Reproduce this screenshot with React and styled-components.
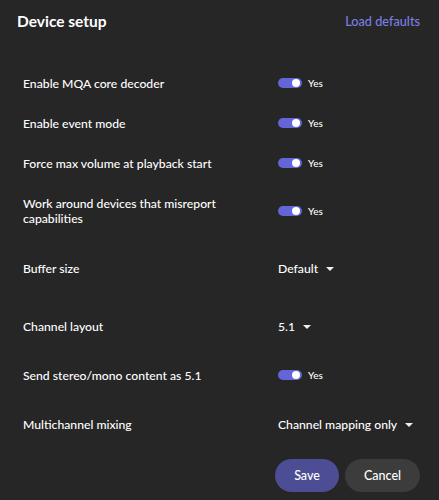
import React from 'react';
import styled, {createGlobalStyle} from 'styled-components';

const GlobalStyle = createGlobalStyle`
    html, body {
        margin: 0;
        padding: 0;
        background: #262626;
    }
`;

const Container = styled.div`
    width: 439px;
    height: 500px;
    box-sizing: border-box;
    background: #262626;
    color: #ffffff;
    font-family: Lato, 'Noto Sans', sans-serif;
    display: flex;
    flex-direction: column;
`;

const Header = styled.div`
    display: flex;
    align-items: center;
    justify-content: space-between;
    height: 42px;
    padding: 0 19px 0 17px;
`;

const Title = styled.h1`
    margin: 0;
    font-size: 15.5px;
    font-weight: 700;
    color: #ffffff;
`;

const LinkButton = styled.button`
    border: none;
    background: none;
    padding: 0;
    font-family: inherit;
    font-size: 12.7px;
    font-weight: 500;
    color: #7b7ee6;
    cursor: pointer;
`;

const List = styled.div`
    display: flex;
    flex-direction: column;
    margin-top: 21px;
    padding: 0 19px 0 23px;
`;

const Row = styled.div`
    display: grid;
    grid-template-columns: 1fr 142px;
    align-items: center;
    min-height: ${p => p.$height}px;
`;

const Label = styled.div`
    font-size: 12.2px;
    font-weight: 500;
    line-height: 15px;
    padding-right: 20px;
`;

const ToggleWrap = styled.div`
    display: flex;
    align-items: center;
    gap: 6px;
`;

const Track = styled.div`
    position: relative;
    width: 24px;
    height: 10px;
    border-radius: 5px;
    background: #6466d8;
`;

const Knob = styled.div`
    position: absolute;
    top: 1px;
    right: 2px;
    width: 8px;
    height: 8px;
    border-radius: 50%;
    background: #ffffff;
`;

const ToggleText = styled.span`
    font-size: 10px;
    font-weight: 500;
`;

const Select = styled.div`
    display: flex;
    align-items: center;
    gap: 8px;
    font-size: 12.2px;
    font-weight: 500;
    white-space: nowrap;
`;

const Caret = styled.span`
    width: 0;
    height: 0;
    border-left: 4px solid transparent;
    border-right: 4px solid transparent;
    border-top: 4px solid #eeeeee;
    margin-top: 1px;
`;

const Footer = styled.div`
    display: flex;
    justify-content: flex-end;
    gap: 6px;
    padding: 0 19px;
    margin-top: 6px;
`;

const Button = styled.button`
    height: 33px;
    width: ${p => p.$width}px;
    border: none;
    border-radius: 17px;
    background: ${p => (p.$primary ? '#4c4d94' : '#3c3c3c')};
    color: #ffffff;
    font-family: inherit;
    font-size: 12.5px;
    font-weight: 500;
    cursor: pointer;
`;

const Toggle = () => (
    <ToggleWrap>
        <Track><Knob /></Track>
        <ToggleText>Yes</ToggleText>
    </ToggleWrap>
);

const Dropdown = ({value}) => (
    <Select>
        {value}
        <Caret />
    </Select>
);

const rows = [
    {label: 'Enable MQA core decoder', toggle: true, height: 40},
    {label: 'Enable event mode', toggle: true, height: 40},
    {label: 'Force max volume at playback start', toggle: true, height: 40},
    {label: 'Work around devices that misreport capabilities', toggle: true, height: 56},
    {label: 'Buffer size', value: 'Default', height: 58},
    {label: 'Channel layout', value: '5.1', height: 58},
    {label: 'Send stereo/mono content as 5.1', toggle: true, height: 40},
    {label: 'Multichannel mixing', value: 'Channel mapping only', height: 58},
];

const App = () => (
    <Container>
        <GlobalStyle />
        <Header>
            <Title>Device setup</Title>
            <LinkButton>Load defaults</LinkButton>
        </Header>
        <List>
            {rows.map(r => (
                <Row key={r.label} $height={r.height}>
                    <Label>{r.label}</Label>
                    {r.toggle ? <Toggle /> : <Dropdown value={r.value} />}
                </Row>
            ))}
        </List>
        <Footer>
            <Button $primary $width={64}>Save</Button>
            <Button $width={75}>Cancel</Button>
        </Footer>
    </Container>
);

export default App;
